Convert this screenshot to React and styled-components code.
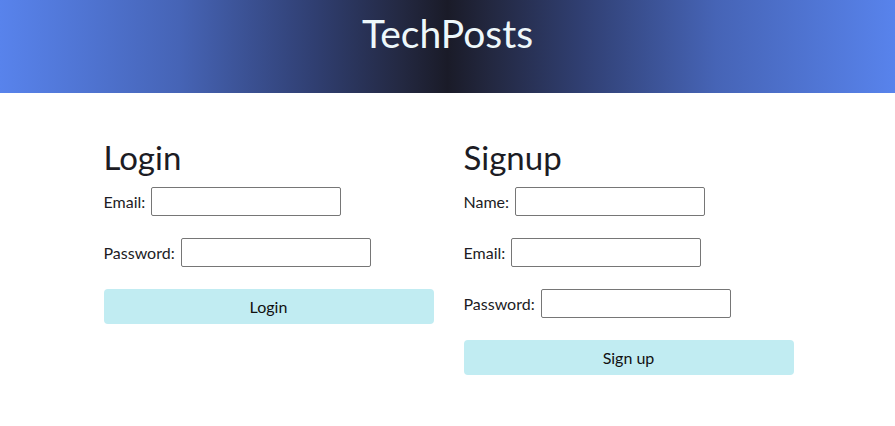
import React from 'react'
import styled, { createGlobalStyle } from 'styled-components'

const GlobalStyle = createGlobalStyle`
    body {
        margin: 0;
        background: #fff;
        font-family: "Trebuchet MS", Lato, "Liberation Sans", sans-serif;
        color: #1c1c24;
    }
`

const Header = styled.header`
    height: 93px;
    display: flex;
    justify-content: center;
    background: linear-gradient(to right, #5883ec 0%, #4664b6 20%, #303f72 35%, #232841 45%, #1a1b28 50%, #232841 55%, #303f72 65%, #4664b6 80%, #5883ec 100%);
`

const Title = styled.h1`
    margin: 0;
    padding-top: 10px;
    font-size: 39px;
    font-weight: 400;
    line-height: 46px;
    color: #eef8fb;
`

const Main = styled.main`
    display: flex;
    justify-content: center;
    gap: 30px;
    padding: 44px 0 0 2px;
`

const Section = styled.section`
    width: 330px;
`

const Heading = styled.h2`
    margin: 0 0 10px;
    font-size: 33px;
    font-weight: 400;
    line-height: 40px;
`

const Form = styled.form`
    display: flex;
    flex-direction: column;
    gap: 22px;
`

const Row = styled.label`
    display: flex;
    align-items: center;
    gap: 6px;
    font-size: 16px;
`

const Input = styled.input`
    width: 190px;
    height: 29px;
    box-sizing: border-box;
    border: 1px solid #767676;
    border-radius: 2px;
    padding: 1px 4px;
    font: inherit;
    outline: none;
`

const Button = styled.button`
    width: 330px;
    height: 35px;
    border: none;
    border-radius: 4px;
    background: #c1ecf2;
    font-family: inherit;
    font-size: 16px;
    color: #111;
    cursor: pointer;
`

const Field = ({ label, type = 'text' }) => (
    <Row>
        {label}:
        <Input type={type} />
    </Row>
)

const App = () => {
    return (
        <>
            <GlobalStyle />
            <Header>
                <Title>TechPosts</Title>
            </Header>
            <Main>
                <Section>
                    <Heading>Login</Heading>
                    <Form onSubmit={(e) => e.preventDefault()}>
                        <Field label="Email" type="email" />
                        <Field label="Password" type="password" />
                        <Button type="submit">Login</Button>
                    </Form>
                </Section>
                <Section>
                    <Heading>Signup</Heading>
                    <Form onSubmit={(e) => e.preventDefault()}>
                        <Field label="Name" />
                        <Field label="Email" type="email" />
                        <Field label="Password" type="password" />
                        <Button type="submit">Sign up</Button>
                    </Form>
                </Section>
            </Main>
        </>
    )
}

export default App
